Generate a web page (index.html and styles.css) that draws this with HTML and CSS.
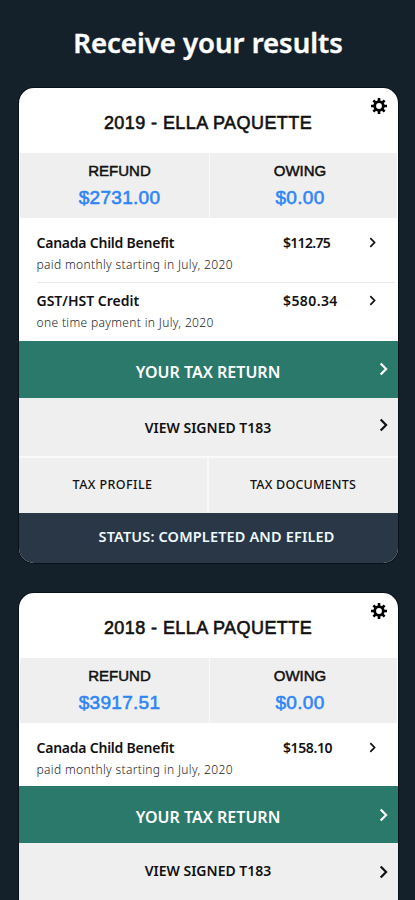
FILE: index.html
```html
<!DOCTYPE html>
<html lang="en">
<head>
<meta charset="utf-8">
<title>Receive your results</title>
<link rel="stylesheet" href="styles.css">
</head>
<body>
<svg width="0" height="0" class="defs" aria-hidden="true">
  <symbol id="gear" viewBox="-8 -8 16 16">
    <g fill="none" stroke="currentColor"><circle r="4.3" stroke-width="2.8"/>
    <path stroke-width="2.6" d="M0-5V-8M0 5V8M-5 0H-8M5 0H8M-3.5-3.5L-5.6-5.6M3.5-3.5L5.6-5.6M-3.5 3.5L-5.6 5.6M3.5 3.5L5.6 5.6"/></g>
  </symbol>
  <symbol id="chevron" viewBox="0 0 8 14">
    <path d="M1.2 1.4L6.6 7L1.2 12.6" fill="none" stroke="currentColor" stroke-width="2.2"/>
  </symbol>
</svg>
<main>
  <h1>Receive your results</h1>
  <section class="card">
    <header class="head"><h2>2019 - ELLA PAQUETTE</h2><svg class="gear"><use href="#gear"/></svg></header>
    <div class="summary">
      <div class="cell"><span class="label">REFUND</span><span class="sum">$2731.00</span></div>
      <div class="cell"><span class="label">OWING</span><span class="sum">$0.00</span></div>
    </div>
    <div class="benefits">
      <div class="benefit">
        <div class="line"><span class="name">Canada Child Benefit</span><span class="amount tight">$112.75</span><svg class="chev-s"><use href="#chevron"/></svg></div>
        <p class="note">paid monthly starting in July, 2020</p>
      </div>
      <div class="benefit last">
        <div class="line"><span class="name gst">GST/HST Credit</span><span class="amount wide">$580.34</span><svg class="chev-s"><use href="#chevron"/></svg></div>
        <p class="note">one time payment in July, 2020</p>
      </div>
    </div>
    <div class="bar primary"><span>YOUR TAX RETURN</span><svg class="chev up"><use href="#chevron"/></svg></div>
    <div class="bar signed"><span>VIEW SIGNED T183</span><svg class="chev up2"><use href="#chevron"/></svg></div>
    <div class="links"><span class="link profile">TAX PROFILE</span><span class="link docs">TAX DOCUMENTS</span></div>
    <footer class="status"><span>STATUS: COMPLETED AND EFILED</span></footer>
  </section>
  <section class="card open">
    <header class="head"><h2>2018 - ELLA PAQUETTE</h2><svg class="gear"><use href="#gear"/></svg></header>
    <div class="summary">
      <div class="cell"><span class="label">REFUND</span><span class="sum">$3917.51</span></div>
      <div class="cell"><span class="label">OWING</span><span class="sum">$0.00</span></div>
    </div>
    <div class="benefits">
      <div class="benefit single">
        <div class="line"><span class="name">Canada Child Benefit</span><span class="amount mid">$158.10</span><svg class="chev-s"><use href="#chevron"/></svg></div>
        <p class="note">paid monthly starting in July, 2020</p>
      </div>
    </div>
    <div class="bar primary"><span>YOUR TAX RETURN</span><svg class="chev"><use href="#chevron"/></svg></div>
    <div class="bar signed raised"><span>VIEW SIGNED T183</span><svg class="chev"><use href="#chevron"/></svg></div>
  </section>
</main>
</body>
</html>
```
FILE: styles.css
```css
* { box-sizing: border-box; }
html, body { margin: 0; height: 900px; overflow: hidden; background: #15212a; }
body { font-family: "Noto Sans", sans-serif; color: #111; }
.defs { position: absolute; }
main { height: 900px; overflow: hidden; }
h1 { margin: 0; height: 88px; padding: 23px 0 0 1px; font-size: 27.5px; line-height: 40px; font-weight: 600; -webkit-text-stroke: .4px #fff; text-align: center; color: #fff; white-space: nowrap; }
.card { width: 379px; margin: 0 0 30px 18.5px; border-radius: 15px; overflow: hidden; background: #fff; box-shadow: 0 0 0 1px #09111a; }
.card.open { border-radius: 15px 15px 0 0; }
.head { position: relative; height: 65px; padding-top: 23px; }
h2 { margin: 0; font: 400 18px/24px "Liberation Sans", sans-serif; letter-spacing: .42px; text-align: center; -webkit-text-stroke: .6px #111; }
.gear { position: absolute; right: 10.5px; top: 10px; width: 16px; height: 16px; color: #000; }
.summary { display: grid; grid-template-columns: 189px 1fr; height: 65px; margin: 0 1px; background: #efefef; font-family: "Liberation Sans", sans-serif; }
.cell { display: flex; flex-direction: column; align-items: center; padding-top: 8px; padding-left: 11px; }
.cell + .cell { border-left: 1px solid #fafafa; padding-left: 0; padding-right: 6px; }
.label { font-size: 15px; line-height: 20px; -webkit-text-stroke: .5px #111; }
.sum { margin-top: 4px; font-size: 19px; line-height: 25px; letter-spacing: .3px; color: #2f86f6; -webkit-text-stroke: .6px #2f86f6; }
.benefits { padding-left: 18px; }
.benefit { height: 65px; padding-top: 13px; border-bottom: 1px solid #e6e6ea; margin-right: 3px; }
.benefit.last { height: 58px; padding-top: 6px; border: 0; }
.benefit.single { height: 63px; border: 0; }
.line { display: flex; align-items: center; height: 22px; font-size: 14px; font-weight: 600; }
.name { width: 246.5px; white-space: nowrap; letter-spacing: -.23px; }
.gst { letter-spacing: 0; }
.amount { width: 86px; }
.tight { letter-spacing: -.7px; }
.mid { letter-spacing: -.4px; }
.wide { letter-spacing: .4px; }
.chev-s { width: 7px; height: 11px; }
.note { margin: 4px 0 0; font-size: 12px; line-height: 16px; letter-spacing: .35px; font-weight: 350; color: #222; white-space: nowrap; }
.bar { position: relative; display: flex; align-items: center; justify-content: center; height: 58px; background: #efefef; font-size: 14px; font-weight: 600; }
.bar.primary { height: 57px; background: #2b796b; color: #fff; font-size: 16px; padding-top: 4px; }
.bar.raised { padding-bottom: 4px; }
.chev { position: absolute; right: 9.5px; top: 22px; width: 9px; height: 14px; }
.up { top: 21px; }
.up2 { top: 20px; }
.links { display: grid; grid-template-columns: 188px 1fr; height: 57px; border-top: 2px solid #f9f9f9; background: #efefef; font-size: 12.5px; font-weight: 500; }
.link { display: flex; align-items: center; justify-content: center; padding-bottom: 3px; }
.profile { letter-spacing: .42px; }
.docs { border-left: 2px solid #f8f8f8; letter-spacing: .2px; }
.status { height: 50px; display: flex; align-items: center; justify-content: center; padding: 0 0 4px 17px; background: #2a3747; color: #eefaff; font-size: 14.5px; font-weight: 600; letter-spacing: .15px; }
```
